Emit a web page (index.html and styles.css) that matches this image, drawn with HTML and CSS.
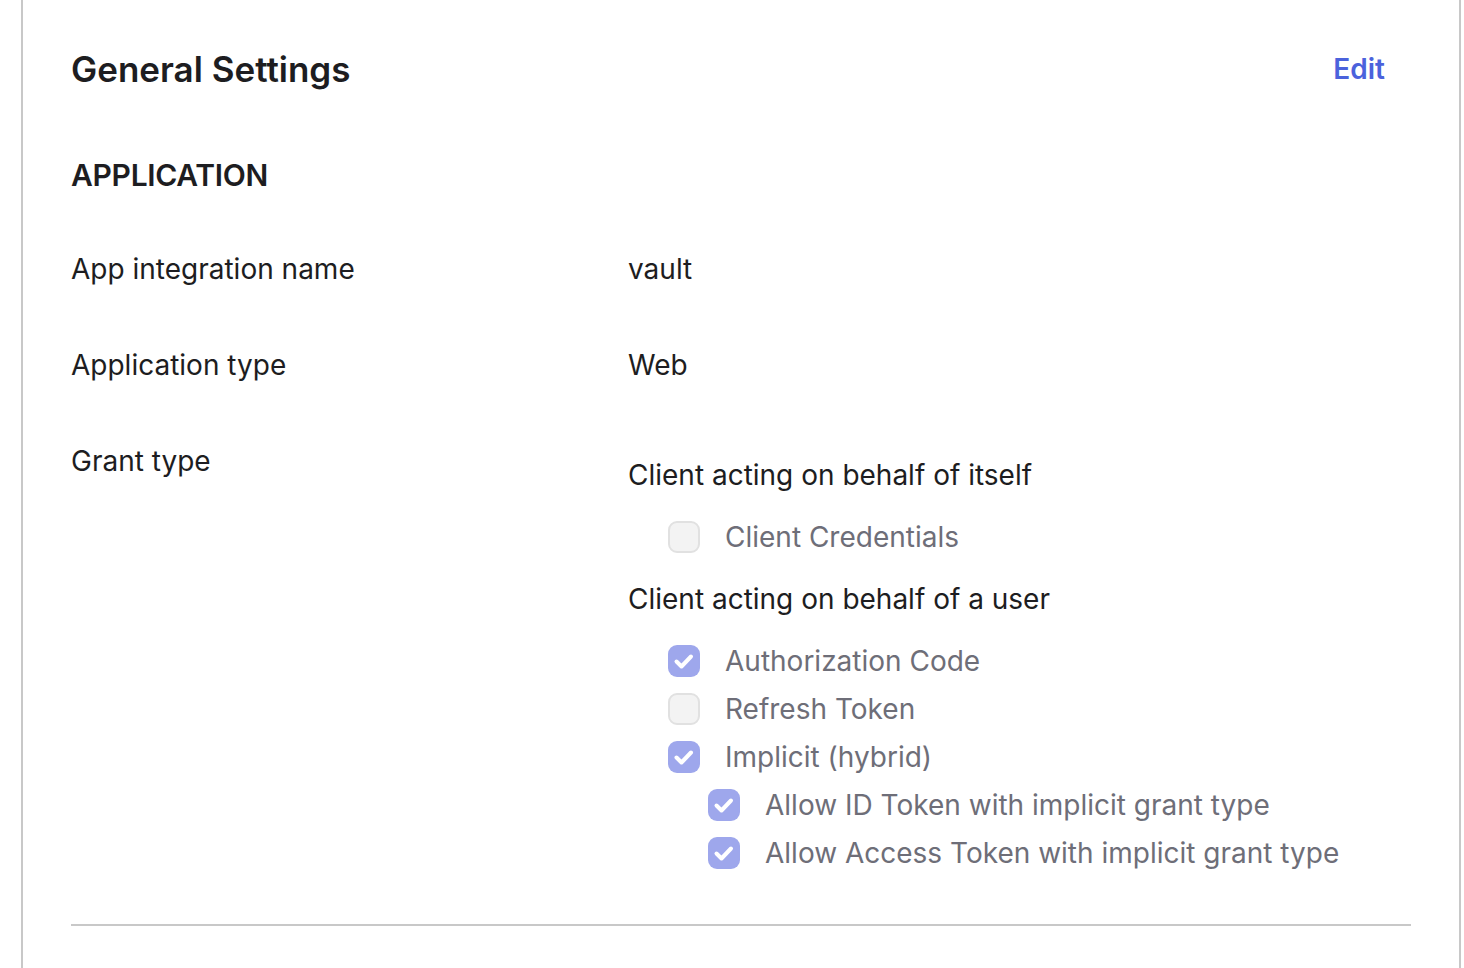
FILE: index.html
```html
<!DOCTYPE html>
<html lang="en">
<head>
    <meta charset="UTF-8">
    <meta name="viewport" content="width=device-width, initial-scale=1.0">
    <title>General Settings</title>
    <link rel="stylesheet" href="styles.css">
</head>
<body>
    <div class="card">
        <div class="card-header">
            <h2>General Settings</h2>
            <a class="edit" href="#">Edit</a>
        </div>

        <h3>APPLICATION</h3>

        <div class="field">
            <div class="label">App integration name</div>
            <div class="value">vault</div>
        </div>
        <div class="field">
            <div class="label">Application type</div>
            <div class="value">Web</div>
        </div>
        <div class="field grant">
            <div class="label">Grant type</div>
            <div class="value">
                <div class="group-title">Client acting on behalf of itself</div>
                <div class="check-list">
                    <div class="check"><span class="box"></span>Client Credentials</div>
                </div>
                <div class="group-title">Client acting on behalf of a user</div>
                <div class="check-list">
                    <div class="check"><span class="box checked"><svg viewBox="0 0 32 32"><path d="M8.5 16.5l5 5l9.5-10"/></svg></span>Authorization Code</div>
                    <div class="check"><span class="box"></span>Refresh Token</div>
                    <div class="check"><span class="box checked"><svg viewBox="0 0 32 32"><path d="M8.5 16.5l5 5l9.5-10"/></svg></span>Implicit (hybrid)</div>
                    <div class="check nested"><span class="box checked"><svg viewBox="0 0 32 32"><path d="M8.5 16.5l5 5l9.5-10"/></svg></span>Allow ID Token with implicit grant type</div>
                    <div class="check nested"><span class="box checked"><svg viewBox="0 0 32 32"><path d="M8.5 16.5l5 5l9.5-10"/></svg></span>Allow Access Token with implicit grant type</div>
                </div>
            </div>
        </div>

        <hr class="divider">
    </div>
</body>
</html>
```

FILE: styles.css
```css
body {
    margin: 0;
    background: #fff;
    font-family: Inter, "Noto Sans", sans-serif;
    color: #1d1d21;
}
.card {
    box-sizing: border-box;
    width: 1440px;
    min-height: 968px;
    margin-left: 21px;
    padding: 47px 48px 0;
    border-left: 2px solid #c8c8c8;
    border-right: 2px solid #c8c8c8;
}
.card-header {
    display: flex;
    justify-content: space-between;
    align-items: center;
}
h2 {
    margin: 0;
    font-size: 35px;
    line-height: 44px;
    font-weight: 600;
    letter-spacing: 0;
}
.edit {
    margin-right: 26px;
    font-size: 28px;
    font-weight: 600;
    color: #4b62dc;
    text-decoration: none;
}
h3 {
    margin: 66px 0 28px;
    font-size: 30px;
    line-height: 36px;
    font-weight: 600;
    letter-spacing: -0.3px;
}
.field {
    display: grid;
    grid-template-columns: 557px 1fr;
    padding: 30px 0;
    font-size: 28px;
    line-height: 36px;
}
.grant {
    padding-bottom: 27px;
}
.grant .value {
    padding-top: 14px;
}
.check-list {
    margin: 20px 0;
}
.check {
    display: flex;
    align-items: center;
    height: 48px;
    padding-left: 40px;
    color: #6e6e78;
}
.check.nested {
    padding-left: 80px;
}
.box {
    box-sizing: border-box;
    width: 32px;
    height: 32px;
    margin-right: 25px;
    border: 2px solid #e1e1e1;
    border-radius: 9px;
    background: #f3f3f3;
    flex-shrink: 0;
}
.box.checked {
    border: none;
    background: #9ea7ec;
}
.box svg {
    display: block;
    width: 32px;
    height: 32px;
    fill: none;
    stroke: #fff;
    stroke-width: 4;
    stroke-linecap: round;
    stroke-linejoin: round;
}
.divider {
    margin: 0;
    border: none;
    border-top: 2px solid #c8c8c8;
}
```
